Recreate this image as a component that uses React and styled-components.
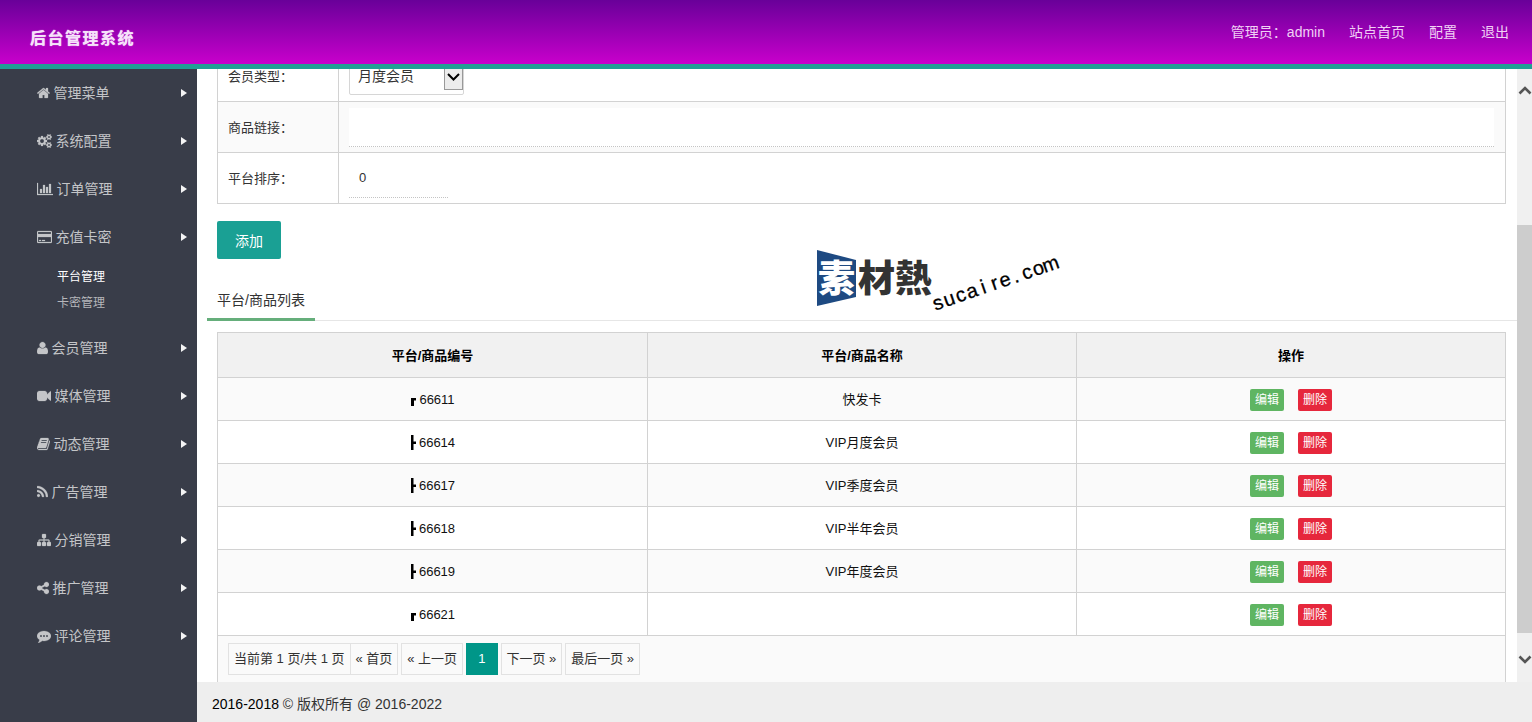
import React from 'react';
import styled, { createGlobalStyle } from 'styled-components';

const GlobalStyle = createGlobalStyle`
    * {
        box-sizing: border-box;
    }

    body {
        margin: 0;
        overflow: hidden;
        font: 14px/24px "Liberation Sans", "Noto Sans CJK SC", sans-serif;
        color: #333;
        background: #fff;
    }
`

const Page = styled.div`
    display: flex;
    flex-direction: column;
    width: 1532px;
    height: 722px;
`

const Header = styled.header`
    display: flex;
    justify-content: space-between;
    flex: none;
    height: 69px;
    padding: 0 23px 0 30px;
    border-bottom: 5px solid #229f95;
    background: linear-gradient(#690099, #c900cc) padding-box;
`

const Brand = styled.h1`
    margin: 27px 0 0;
    font-size: 16px;
    line-height: 24px;
    letter-spacing: 1.5px;
    color: #f6e2fa;
    text-shadow: 0 0 1px #f6e2fa;
`

const TopNav = styled.nav`
    display: flex;
    gap: 24px;
    padding-top: 20px;
    color: #f0d0f5;
`

const Body = styled.div`
    display: flex;
    flex: 1;
    min-height: 0;
`

const Sidebar = styled.aside`
    flex: none;
    width: 197px;
    color: #c4c5c8;
    background: #393d49;
`

const MenuItem = styled.div`
    display: flex;
    align-items: center;
    height: 48.1px;
    padding: 0 10px 0 37px;
`

const MenuIcon = styled.svg`
    flex: none;
    width: ${props => props.$width}px;
    height: 14px;
    margin-right: 3.5px;
    fill: currentColor;
    stroke: currentColor;
    stroke-width: 30;
`

const Arrow = styled.span`
    margin-left: auto;
    border: 4px solid transparent;
    border-left: 6px solid #f4f4f4;
    border-right: 0;
`

const SubMenu = styled.div`
    height: 62.3px;
    padding: 3px 0 0 57px;
`

const SubItem = styled.div`
    height: 26px;
    font-size: 12px;
    line-height: 26px;
    color: ${props => props.$active ? '#fff' : '#b5b6ba'};
`

const Main = styled.div`
    display: flex;
    flex-direction: column;
    flex: 1;
    min-width: 0;
`

const Viewport = styled.div`
    display: flex;
    flex: 1;
    min-height: 0;
`

const Content = styled.main`
    position: relative;
    flex: 1;
    padding: 0 11px 0 20px;
    overflow: hidden;
`

const Form = styled.div`
    margin-top: -20px;
    border: 1px solid #d2d2d2;
    font-size: 13px;
`

const FormRow = styled.div`
    display: flex;
    height: 51px;
    background: ${props => props.$shaded ? '#fafafa' : '#fff'};

    & + & {
        border-top: 1px solid #d2d2d2;
    }
`

const Label = styled.div`
    display: flex;
    align-items: center;
    width: 121px;
    padding: 2px 0 0 10px;
    border-right: 1px solid #d2d2d2;
`

const Field = styled.div`
    flex: 1;
    padding: 6px 11px 0 10px;
`

const Select = styled.div`
    display: flex;
    justify-content: space-between;
    width: 115px;
    height: 39px;
    padding-left: 8px;
    border: 1px solid #d6d6d6;
    border-radius: 2px;
    font-size: 14px;
    line-height: 38px;
`

const SelectButton = styled.span`
    display: flex;
    align-items: center;
    justify-content: center;
    width: 19px;
    height: 26px;
    margin-top: 7px;
    border: 1px solid #999;
    background: #ececec;
`

const Input = styled.div`
    width: ${props => props.$width || '100%'};
    height: 39px;
    padding-left: 10px;
    border-bottom: 1px dotted #c4c4c4;
    line-height: 38px;
    background: #fff;
`

const AddButton = styled.div`
    width: 64px;
    height: 38px;
    margin-top: 17px;
    border-radius: 2px;
    line-height: 40px;
    text-align: center;
    color: #fff;
    background: #1aa094;
`

const Tabs = styled.div`
    display: flex;
    height: 41px;
    margin: 21px -11px 11px -10px;
    border-bottom: 1px solid #e6e6e6;
`

const Tab = styled.div`
    height: 41px;
    padding: 0 10px;
    border-bottom: 3px solid #65ae7b;
    line-height: 41px;
`

const Table = styled.div`
    border: 1px solid #d2d2d2;
    font-size: 13px;
    color: #111;
`

const Row = styled.div`
    display: grid;
    grid-template-columns: 429px 429px 1fr;
    height: ${props => props.$head ? 44.5 : 43.15}px;
    font-weight: ${props => props.$head ? 'bold' : 'normal'};
    color: ${props => props.$head ? '#000' : '#111'};
    background: ${props => props.$head ? '#f1f1f1' : props.$shaded ? '#fafafa' : '#fff'};
    border-bottom: 1px solid #d2d2d2;
`

const Cell = styled.div`
    display: flex;
    align-items: center;
    justify-content: center;
    padding-top: 2px;

    & + & {
        border-left: 1px solid #d2d2d2;
    }
`

const Branch = styled.svg`
    width: 6px;
    height: 16px;
    margin-right: 3px;
    fill: #000;
`

const Action = styled.span`
    width: 34px;
    height: 22px;
    border-radius: 2px;
    font-size: 12px;
    line-height: 23px;
    text-align: center;
    color: #fff;
    background: ${props => props.$danger ? '#e6273c' : '#5fb562'};

    & + & {
        margin-left: 14px;
    }
`

const Pager = styled.div`
    display: flex;
    height: 60px;
    padding: 7px 10px;
    background: #fafafa;
`

const PageLink = styled.span`
    height: 32px;
    margin-right: ${props => props.$joined ? -1 : 2.8}px;
    padding: 0 5px;
    border: 1px solid #e2e2e2;
    line-height: 30px;
    color: #333;
    white-space: nowrap;
`

const CurrentPage = styled.span`
    width: 32px;
    height: 32px;
    margin-right: 2.7px;
    line-height: 32px;
    text-align: center;
    color: #fff;
    background: #009688;
`

const Watermark = styled.svg`
    position: absolute;
    left: 615px;
    top: 176px;
    width: 260px;
    height: 75px;
`

const Scrollbar = styled.div`
    display: flex;
    flex-direction: column;
    align-items: center;
    width: 15px;
    background: #f0f0f0;
`

const Thumb = styled.div`
    width: 15px;
    height: 408px;
    background: #cdcdcd;
`

const ScrollArrow = styled.svg`
    width: 14px;
    height: 10px;
    margin: ${props => props.$down ? '22px 0 0' : '16px 0 130px'};
    fill: none;
    stroke: #555;
    stroke-width: 2.6;
`

const Footer = styled.footer`
    flex: none;
    height: 40px;
    padding: 0 15px;
    line-height: 44px;
    background: #eee;
`

const Years = styled.span`
    color: #000;
`

const icons = {
    home: { box: '64 0 1664 1792', width: 13, d: 'M1472 992v480q0 26-19 45t-45 19h-384v-384h-256v384h-384q-26 0-45-19t-19-45v-480q0-1 .5-3t.5-3l575-474 575 474q1 2 1 6zm223-69l-62 74q-8 9-21 11h-3q-13 0-21-7l-692-577-692 577q-12 8-24 7-13-2-21-11l-62-74q-8-10-7-23.5t11-21.5l719-599q32-26 76-26t76 26l244 204v-195q0-14 9-23t23-9h192q14 0 23 9t9 23v408l219 182q10 8 11 21.5t-7 23.5z' },
    cogs: { box: '-64 0 1920 1792', width: 15, d: 'M832 896q0-106-75-181t-181-75-181 75-75 181 75 181 181 75 181-75 75-181zm768 512q0-52-38-90t-90-38-90 38-38 90q0 53 37.5 90.5t90.5 37.5 90.5-37.5 37.5-90.5zm0-1024q0-52-38-90t-90-38-90 38-38 90q0 53 37.5 90.5t90.5 37.5 90.5-37.5 37.5-90.5zm-384 421v185q0 10-7 19.5t-16 10.5l-155 24q-11 35-32 76 34 48 90 115 7 11 7 20 0 12-7 19-23 30-82.5 89.5t-78.5 59.5q-11 0-21-7l-115-90q-37 19-77 31-11 108-23 155-7 24-30 24h-186q-11 0-20-7.5t-10-17.5l-23-153q-34-10-75-31l-118 89q-7 7-20 7-11 0-21-8-144-133-144-160 0-9 7-19 10-14 41-53t47-61q-23-44-35-82l-152-24q-10-1-17-9.5t-7-19.5v-185q0-10 7-19.5t16-10.5l155-24q11-35 32-76-34-48-90-115-7-11-7-20 0-12 7-20 22-30 82-89t79-59q11 0 21 7l115 90q34-18 77-32 11-108 23-154 7-24 30-24h186q11 0 20 7.5t10 17.5l23 153q34 10 75 31l118-89q8-7 20-7 11 0 21 8 144 133 144 160 0 8-7 19-12 16-42 54t-45 60q23 48 34 82l152 23q10 2 17 10.5t7 19.5zm640 533v140q0 16-149 31-12 27-30 52 51 113 51 138 0 4-4 7-122 71-124 71-8 0-46-47t-52-68q-20 2-30 2t-30-2q-14 21-52 68t-46 47q-2 0-124-71-4-3-4-7 0-25 51-138-18-25-30-52-149-15-149-31v-140q0-16 149-31 13-29 30-52-51-113-51-138 0-4 4-7 4-2 35-20t59-34 30-16q8 0 46 46.5t52 67.5q20-2 30-2t30 2q51-71 92-112l6-2q4 0 124 70 4 3 4 7 0 25-51 138 17 23 30 52 149 15 149 31zm0-1024v140q0 16-149 31-12 27-30 52 51 113 51 138 0 4-4 7-122 71-124 71-8 0-46-47t-52-68q-20 2-30 2t-30-2q-14 21-52 68t-46 47q-2 0-124-71-4-3-4-7 0-25 51-138-18-25-30-52-149-15-149-31v-140q0-16 149-31 13-29 30-52-51-113-51-138 0-4 4-7 4-2 35-20t59-34 30-16q8 0 46 46.5t52 67.5q20-2 30-2t30 2q51-71 92-112l6-2q4 0 124 70 4 3 4 7 0 25-51 138 17 23 30 52 149 15 149 31z' },
    chart: { box: '0 0 2048 1792', width: 16, d: 'M640 896v512h-256v-512h256zm384-512v1024h-256v-1024h256zm1024 1152v128h-2048v-1536h128v1408h1920zm-640-896v768h-256v-768h256zm384-384v1152h-256v-1152h256z' },
    card: { box: '0 0 1920 1792', width: 15, d: 'M1760 128q66 0 113 47t47 113v1216q0 66-47 113t-113 47h-1600q-66 0-113-47t-47-113v-1216q0-66 47-113t113-47h1600zm-1600 128q-13 0-22.5 9.5t-9.5 22.5v224h1664v-224q0-13-9.5-22.5t-22.5-9.5h-1600zm1600 1280q13 0 22.5-9.5t9.5-22.5v-608h-1664v608q0 13 9.5 22.5t22.5 9.5h1600zm-1504-128v-128h256v128h-256zm384 0v-128h384v128h-384z' },
    user: { box: '192 0 1408 1792', width: 11, d: 'M1600 1405q0 120-73 189.5t-194 69.5h-874q-121 0-194-69.5t-73-189.5q0-53 3.5-103.5t14-109 26.5-108.5 43-97.5 62-81 85.5-53.5 111.5-20q9 0 42 21.5t74.5 48 108 48 133.5 21.5 133.5-21.5 108-48 74.5-48 42-21.5q61 0 111.5 20t85.5 53.5 62 81 43 97.5 26.5 108.5 14 109 3.5 103.5zm-320-893q0 159-112.5 271.5t-271.5 112.5-271.5-112.5-112.5-271.5 112.5-271.5 271.5-112.5 271.5 112.5 112.5 271.5z' },
    video: { box: '0 0 1792 1792', width: 14, d: 'M1792 352v1088q0 42-39 59-13 5-25 5-27 0-45-19l-403-403v166q0 119-84.5 203.5t-203.5 84.5h-704q-119 0-203.5-84.5t-84.5-203.5v-704q0-119 84.5-203.5t203.5-84.5h704q119 0 203.5 84.5t84.5 203.5v165l403-402q18-19 45-19 12 0 25 5 39 17 39 59z' },
    book: { box: '64 0 1664 1792', width: 13, d: 'M1703 478q40 57 18 129l-275 906q-19 64-76.5 107.5t-122.5 43.5h-923q-77 0-148.5-53.5t-99.5-131.5q-24-67-2-127 0-4 3-27t4-37q1-8-3-21.5t-3-19.5q2-11 8-21t16.5-23.5 16.5-23.5q23-38 45-91.5t30-91.5q3-10 .5-30t-.5-28q3-11 17-28t17-23q21-36 42-92t25-90q1-9-2.5-32t.5-28q4-13 22-30.5t22-22.5q19-26 42.5-84.5t27.5-96.5q1-8-3-25.5t-2-26.5q2-8 9-18t18-23 17-21q8-12 16.5-30.5t15-35 16-36 19.5-32 26.5-23.5 36-11.5 47.5 5.5l-1 3q38-9 51-9h761q74 0 114 56t18 130l-274 906q-36 119-71.5 153.5t-128.5 34.5h-869q-27 0-38 15-11 16-1 43 24 70 144 70h923q29 0 56-15.5t35-41.5l300-987q7-22 5-57 38 15 59 43zm-1064 2q-4 13 2 22.5t20 9.5h608q13 0 25.5-9.5t16.5-22.5l21-64q4-13-2-22.5t-20-9.5h-608q-13 0-25.5 9.5t-16.5 22.5zm-83 256q-4 13 2 22.5t20 9.5h608q13 0 25.5-9.5t16.5-22.5l21-64q4-13-2-22.5t-20-9.5h-608q-13 0-25.5 9.5t-16.5 22.5z' },
    rss: { box: '192 0 1408 1792', width: 11, d: 'M576 1344q0 80-56 136t-136 56-136-56-56-136 56-136 136-56 136 56 56 136zm512 123q2 28-17 48-18 21-47 21h-135q-25 0-43-16.5t-20-41.5q-22-229-184.5-391.5t-391.5-184.5q-25-2-41.5-20t-16.5-43v-135q0-29 21-47 17-17 43-17h5q160 13 306 80.5t259 181.5q114 113 181.5 259t80.5 306zm512 2q2 27-18 47-18 20-46 20h-143q-26 0-44.5-17.5t-19.5-42.5q-12-215-101-408.5t-231.5-336-336-231.5-408.5-102q-25-1-42.5-19.5t-17.5-43.5v-143q0-28 20-46 18-18 44-18h3q262 13 501.5 120t425.5 294q187 186 294 425.5t120 501.5z' },
    sitemap: { box: '0 0 1792 1792', width: 14, d: 'M1792 1248v320q0 40-28 68t-68 28h-320q-40 0-68-28t-28-68v-320q0-40 28-68t68-28h96v-192h-512v192h96q40 0 68 28t28 68v320q0 40-28 68t-68 28h-320q-40 0-68-28t-28-68v-320q0-40 28-68t68-28h96v-192h-512v192h96q40 0 68 28t28 68v320q0 40-28 68t-68 28h-320q-40 0-68-28t-28-68v-320q0-40 28-68t68-28h96v-192q0-52 38-90t90-38h512v-192h-96q-40 0-68-28t-28-68v-320q0-40 28-68t68-28h320q40 0 68 28t28 68v320q0 40-28 68t-68 28h-96v192h512q52 0 90 38t38 90v192h96q40 0 68 28t28 68z' },
    share: { box: '128 0 1536 1792', width: 12, d: 'M1344 1024q133 0 226.5 93.5t93.5 226.5-93.5 226.5-226.5 93.5-226.5-93.5-93.5-226.5q0-12 2-34l-360-180q-92 86-218 86-133 0-226.5-93.5t-93.5-226.5 93.5-226.5 226.5-93.5q126 0 218 86l360-180q-2-22-2-34 0-133 93.5-226.5t226.5-93.5 226.5 93.5 93.5 226.5-93.5 226.5-226.5 93.5q-126 0-218-86l-360 180q2 22 2 34t-2 34l360 180q92-86 218-86z' },
    comment: { box: '0 0 1792 1792', width: 14, d: 'M640 896q0-53-37.5-90.5t-90.5-37.5-90.5 37.5-37.5 90.5 37.5 90.5 90.5 37.5 90.5-37.5 37.5-90.5zm384 0q0-53-37.5-90.5t-90.5-37.5-90.5 37.5-37.5 90.5 37.5 90.5 90.5 37.5 90.5-37.5 37.5-90.5zm384 0q0-53-37.5-90.5t-90.5-37.5-90.5 37.5-37.5 90.5 37.5 90.5 90.5 37.5 90.5-37.5 37.5-90.5zm384 0q0 174-120 321.5t-326 233-450 85.5q-110 0-211-18-173 173-435 229-52 10-86 13-12 1-22-6t-13-18q-4-15 20-37 5-5 23.5-21.5t25.5-23.5 23.5-25.5 24-31.5 20.5-37 20-48 14.5-57.5 12.5-72.5q-146-90-229.5-216.5t-83.5-269.5q0-174 120-321.5t326-233 450-85.5 450 85.5 326 233 120 321.5z' },
}

const menu = [
    { icon: 'home', name: '管理菜单' },
    { icon: 'cogs', name: '系统配置' },
    { icon: 'chart', name: '订单管理' },
    { icon: 'card', name: '充值卡密', children: ['平台管理', '卡密管理'] },
    { icon: 'user', name: '会员管理' },
    { icon: 'video', name: '媒体管理' },
    { icon: 'book', name: '动态管理' },
    { icon: 'rss', name: '广告管理' },
    { icon: 'sitemap', name: '分销管理' },
    { icon: 'share', name: '推广管理' },
    { icon: 'comment', name: '评论管理' },
]

const products = [
    { id: '66611', name: '快发卡', root: true },
    { id: '66614', name: 'VIP月度会员' },
    { id: '66617', name: 'VIP季度会员' },
    { id: '66618', name: 'VIP半年会员' },
    { id: '66619', name: 'VIP年度会员' },
    { id: '66621', name: '', root: true },
]

const Menu = () => (
    <Sidebar>
        {menu.map(({ icon, name, children }) => (
            <React.Fragment key={name}>
                <MenuItem>
                    <MenuIcon $width={icons[icon].width} viewBox={icons[icon].box}>
                        <path d={icons[icon].d} />
                    </MenuIcon>
                    {name}
                    <Arrow />
                </MenuItem>
                {children && (
                    <SubMenu>
                        {children.map((child, i) => (
                            <SubItem key={child} $active={i === 0}>{child}</SubItem>
                        ))}
                    </SubMenu>
                )}
            </React.Fragment>
        ))}
    </Sidebar>
)

const ProductRow = ({ product, shaded }) => (
    <Row $shaded={shaded}>
        <Cell>
            <Branch viewBox="0 0 6 16">
                <path d={product.root ? 'M1 6h5v2.5H4V14H1z' : 'M1 0h2.5v6.5H6V9H3.5v6H1z'} />
            </Branch>
            {product.id}
        </Cell>
        <Cell>{product.name}</Cell>
        <Cell>
            <Action>编辑</Action>
            <Action $danger>删除</Action>
        </Cell>
    </Row>
)

const Logo = () => (
    <Watermark viewBox="0 0 260 75">
        <path fill="#1e4a82" d="M5 5l39 10v37L5 61z" />
        <g fontFamily="Noto Sans CJK SC" fontWeight="900" fontSize="37">
            <text x="6" y="47" fill="#fff">素</text>
            <text x="46" y="47" fill="#333" textLength="74">材熱</text>
        </g>
        <text
            transform="translate(128 64) rotate(-19)"
            x="0 12 24 36 48 60 71 82 94 106 119"
            textAnchor="middle"
            fontFamily="Liberation Sans"
            fontSize="20"
            fill="#000"
            stroke="#000"
            strokeWidth=".3"
        >
            sucaire.com
        </text>
    </Watermark>
)

const App = () => (
    <Page>
        <GlobalStyle />
        <Header>
            <Brand>后台管理系统</Brand>
            <TopNav>
                <span>管理员：admin</span>
                <span>站点首页</span>
                <span>配置</span>
                <span>退出</span>
            </TopNav>
        </Header>
        <Body>
            <Menu />
            <Main>
                <Viewport>
                    <Content>
                        <Form>
                            <FormRow>
                                <Label>会员类型：</Label>
                                <Field>
                                    <Select>
                                        月度会员
                                        <SelectButton>
                                            <svg width="13" height="9" viewBox="0 0 13 9">
                                                <path d="M1 1l5.5 5.5L12 1" fill="none" stroke="#000" strokeWidth="2" />
                                            </svg>
                                        </SelectButton>
                                    </Select>
                                </Field>
                            </FormRow>
                            <FormRow $shaded>
                                <Label>商品链接：</Label>
                                <Field>
                                    <Input />
                                </Field>
                            </FormRow>
                            <FormRow>
                                <Label>平台排序：</Label>
                                <Field>
                                    <Input $width="99px">0</Input>
                                </Field>
                            </FormRow>
                        </Form>
                        <AddButton>添加</AddButton>
                        <Tabs>
                            <Tab>平台/商品列表</Tab>
                        </Tabs>
                        <Table>
                            <Row $head>
                                <Cell>平台/商品编号</Cell>
                                <Cell>平台/商品名称</Cell>
                                <Cell>操作</Cell>
                            </Row>
                            {products.map((product, i) => (
                                <ProductRow key={product.id} product={product} shaded={i % 2 === 0} />
                            ))}
                            <Pager>
                                <PageLink $joined>当前第 1 页/共 1 页</PageLink>
                                <PageLink>« 首页</PageLink>
                                <PageLink>« 上一页</PageLink>
                                <CurrentPage>1</CurrentPage>
                                <PageLink>下一页 »</PageLink>
                                <PageLink>最后一页 »</PageLink>
                            </Pager>
                        </Table>
                        <Logo />
                    </Content>
                    <Scrollbar>
                        <ScrollArrow viewBox="0 0 14 10">
                            <path d="M1.5 8.5L7 3l5.5 5.5" />
                        </ScrollArrow>
                        <Thumb />
                        <ScrollArrow $down viewBox="0 0 14 10">
                            <path d="M1.5 1.5L7 7l5.5-5.5" />
                        </ScrollArrow>
                    </Scrollbar>
                </Viewport>
                <Footer>
                    <Years>2016-2018</Years> © 版权所有 @ 2016-2022
                </Footer>
            </Main>
        </Body>
    </Page>
)

export default App;
